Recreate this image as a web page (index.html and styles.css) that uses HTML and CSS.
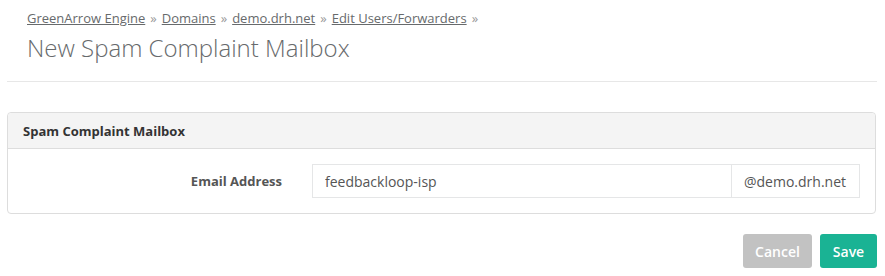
FILE: index.html
```html
<!DOCTYPE html>
<html>
<head>
<meta charset="utf-8">
<link rel="stylesheet" href="styles.css">
</head>
<body>
<div class="page">
  <header class="page-header">
    <nav class="breadcrumb">
      <a href="#">GreenArrow Engine</a><span class="sep">»</span><a href="#">Domains</a><span class="sep">»</span><a href="#">demo.drh.net</a><span class="sep">»</span><a href="#">Edit Users/Forwarders</a><span class="sep">»</span>
    </nav>
    <h1 class="title">New Spam Complaint Mailbox</h1>
  </header>
  <section class="panel">
    <div class="panel-heading">Spam Complaint Mailbox</div>
    <div class="panel-body">
      <label class="field-label">Email Address</label>
      <div class="input-group">
        <input class="input" type="text" value="feedbackloop-isp">
        <span class="addon">@demo.drh.net</span>
      </div>
    </div>
  </section>
  <div class="actions">
    <button class="btn btn-cancel">Cancel</button>
    <button class="btn btn-save">Save</button>
  </div>
</div>
</body>
</html>
```
FILE: styles.css
```css
* { box-sizing: border-box; }
html, body { margin: 0; padding: 0; background: #fff; }
body {
  font-family: "Open Sans", "Liberation Sans", sans-serif;
  color: #555;
  font-size: 13px;
}
.page {
  padding: 0 8px 0 7px;
}
.page-header {
  padding: 8px 20px 0 20px;
  height: 82px;
  border-bottom: 1px solid #e7e7e7;
}
.breadcrumb {
  font-size: 13px;
  line-height: 20px;
  color: #888;
}
.breadcrumb a {
  color: #676a6c;
  text-decoration: underline;
}
.breadcrumb .sep {
  margin: 0 5px;
  color: #999;
}
.title {
  margin: 5px 0 0 0;
  font-size: 24px;
  font-weight: 300;
  line-height: 30px;
  color: #676a6c;
}
.panel {
  margin-top: 30px;
  border: 1px solid #ddd;
  border-radius: 4px;
  margin-right: 1px;
}
.panel-heading {
  height: 36px;
  padding: 0 15px;
  display: flex;
  align-items: center;
  background: #f4f4f4;
  border-bottom: 1px solid #ddd;
  border-radius: 4px 4px 0 0;
  font-weight: 700;
  color: #333;
  font-size: 13px;
}
.panel-body {
  padding: 15px 15px 15px 0;
  display: grid;
  grid-template-columns: 289px 1fr;
  align-items: center;
}
.field-label {
  text-align: right;
  padding-right: 15px;
  font-weight: 700;
  color: #555;
}
.input-group {
  display: flex;
  margin-left: 15px;
  height: 34px;
}
.input {
  flex: 1;
  height: 34px;
  border: 1px solid #e5e6e7;
  border-right: none;
  padding: 0 12px;
  font-family: inherit;
  font-size: 14px;
  color: #555;
  outline: none;
}
.addon {
  display: flex;
  align-items: center;
  padding: 0 12px;
  border: 1px solid #e5e6e7;
  font-size: 14px;
  color: #555;
  width: 129px;
}
.actions {
  display: flex;
  justify-content: flex-end;
  gap: 8px;
  margin-top: 20px;
}
.btn {
  height: 34px;
  border: none;
  border-radius: 3px;
  padding: 0 12px;
  font-family: inherit;
  font-size: 14px;
  font-weight: 600;
  color: #fff;
}
.btn-cancel { background: #c2c2c2; width: 69px; }
.btn-save { background: #1ab394; width: 57px; }
```
